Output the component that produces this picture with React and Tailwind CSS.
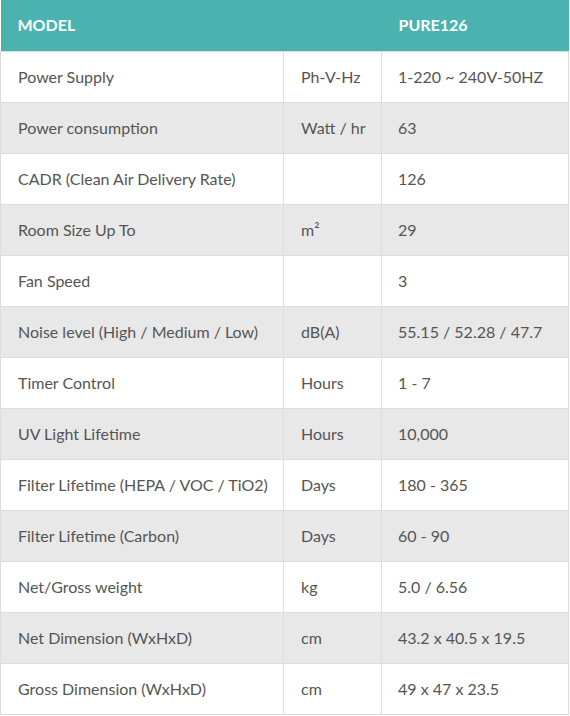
import React from 'react';

const rows = [
  ['Power Supply', 'Ph-V-Hz', '1-220 ~ 240V-50HZ'],
  ['Power consumption', 'Watt / hr', '63'],
  ['CADR (Clean Air Delivery Rate)', '', '126'],
  ['Room Size Up To', 'm²', '29'],
  ['Fan Speed', '', '3'],
  ['Noise level (High / Medium / Low)', 'dB(A)', '55.15 / 52.28 / 47.7'],
  ['Timer Control', 'Hours', '1 - 7'],
  ['UV Light Lifetime', 'Hours', '10,000'],
  ['Filter Lifetime (HEPA / VOC / TiO2)', 'Days', '180 - 365'],
  ['Filter Lifetime (Carbon)', 'Days', '60 - 90'],
  ['Net/Gross weight', 'kg', '5.0 / 6.56'],
  ['Net Dimension (WxHxD)', 'cm', '43.2 x 40.5 x 19.5'],
  ['Gross Dimension (WxHxD)', 'cm', '49 x 47 x 23.5'],
];

const App = () => {
  return (
    <div className="bg-white" style={{ fontFamily: 'Lato, "Open Sans", sans-serif' }}>
      <table className="w-[569px] border-collapse table-fixed text-[16px] text-[#555]">
        <colgroup>
          <col className="w-[283px]" />
          <col className="w-[98px]" />
          <col />
        </colgroup>
        <thead>
          <tr className="h-[51px] bg-[#4ab3b0] text-white">
            <th colSpan={2} className="px-[17px] text-left font-bold uppercase">Model</th>
            <th className="px-[17px] text-left font-bold">PURE126</th>
          </tr>
        </thead>
        <tbody>
          {rows.map((r, i) => (
            <tr key={i} className={`h-[51px] ${i % 2 === 1 ? 'bg-[#e8e8e8]' : 'bg-white'}`}>
              <td className="border border-[#ddd] pl-[17px] pr-0 pt-[1px] whitespace-nowrap">{r[0]}</td>
              <td className="border border-[#ddd] pl-[17px] pr-0 pt-[1px] whitespace-nowrap">{r[1]}</td>
              <td className="border border-[#ddd] pl-[16px] pr-0 pt-[1px] whitespace-nowrap">{r[2]}</td>
            </tr>
          ))}
        </tbody>
      </table>
    </div>
  );
};

export default App;
